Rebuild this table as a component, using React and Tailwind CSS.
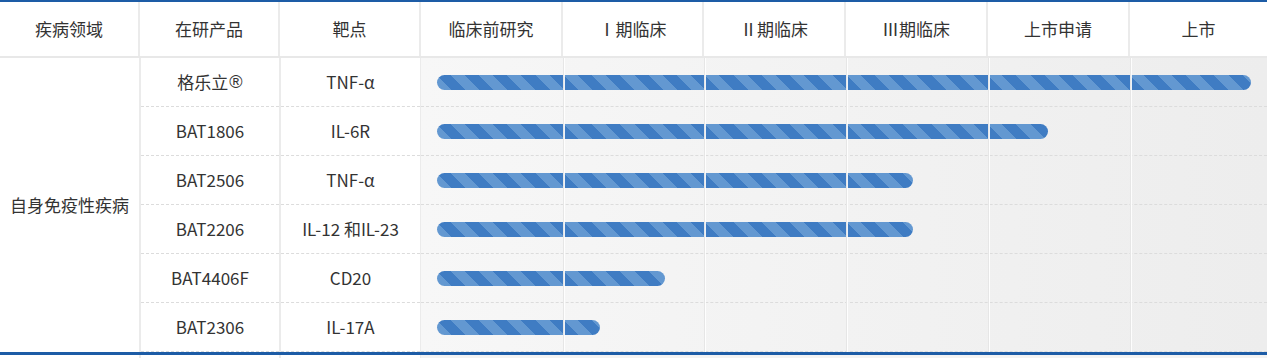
import React from "react";

const heads = ["疾病领域", "在研产品", "靶点", "临床前研究", "Ⅰ期临床", "Ⅱ期临床", "Ⅲ期临床", "上市申请", "上市"];

const rows = [
  { name: "格乐立", reg: true, target: "TNF-α", bar: "w-[814px]" },
  { name: "BAT1806", target: "IL-6R", bar: "w-[611px]" },
  { name: "BAT2506", target: "TNF-α", bar: "w-[476px]" },
  { name: "BAT2206", target: "IL-12 和IL-23", bar: "w-[476px]" },
  { name: "BAT4406F", target: "CD20", bar: "w-[228px]" },
  { name: "BAT2306", target: "IL-17A", bar: "w-[163px]" },
];

const cols = "grid-cols-[140px_140px_141px_142px_141px_142px_142px_142px_1fr]";

export default function App() {
  return (
    <div className="w-[1267px] h-[358px] overflow-hidden bg-white font-['Noto_Sans_CJK_SC','Noto_Sans',sans-serif] text-[17px] text-[#333]">
      <div className="border-t-[2px] border-[#1d5ca6]">
        <div className={`grid ${cols} h-[56px] border-b-2 border-[#e8e8e8]`}>
          {heads.map((h, i) => (
            <div
              key={i}
              className={`flex items-center justify-center ${i < 8 ? "border-r-2 border-[#ebebeb]" : ""}`}
            >
              {h}
            </div>
          ))}
        </div>
      </div>

      <div className="flex border-b-[3px] border-[#1d5ca6]">
        <div className="w-[141px] shrink-0 flex items-center justify-center border-r-2 border-[#ebebeb]">
          自身免疫性疾病
        </div>
        <div className="w-[140px] shrink-0 flex flex-col border-r-2 border-[#ebebeb]">
          {rows.map((r, i) => (
            <div key={i} className="h-[49px] flex items-center justify-center border-b border-dashed border-[#dcdcdc]">
              {r.name}
              {r.reg && <span className="font-['Liberation_Sans',sans-serif] text-[18px] ml-[1px]">®</span>}
            </div>
          ))}
        </div>
        <div className="w-[140px] shrink-0 flex flex-col border-r border-[#ebebeb]">
          {rows.map((r, i) => (
            <div key={i} className="h-[49px] flex items-center justify-center border-b border-dashed border-[#dcdcdc]">
              {r.target}
            </div>
          ))}
        </div>
        <div className="relative flex-1 flex flex-col bg-gradient-to-r from-[#f7f7f7] to-[#ededed]">
          {rows.map((r, i) => (
            <div key={i} className="h-[49px] flex items-center pl-[16px] border-b border-dashed border-[#dcdcdc]">
              <div
                className={`${r.bar} h-[15px] rounded-full bg-[repeating-linear-gradient(45deg,#6398d1_0px,#6398d1_10px,#3f7cc3_10px,#3f7cc3_20px)]`}
              />
            </div>
          ))}
          <div className="absolute inset-0 grid grid-cols-[142px_141px_142px_142px_142px_1fr] pointer-events-none">
            {[0, 1, 2, 3, 4, 5].map((c) => (
              <div key={c} className={c === 0 ? "" : "border-l border-[#e6e6e6]"}>
                <div className={c === 0 ? "" : "h-full w-px bg-white/90"} />
              </div>
            ))}
          </div>
        </div>
      </div>
      <div className="flex h-[10px]">
        <div className="w-[141px] border-r-2 border-[#ebebeb]" />
        <div className="w-[140px] border-r-2 border-[#ebebeb]" />
        <div className="w-[140px] border-r border-[#ebebeb]" />
        <div className="flex-1 bg-[#f3f3f3]" />
      </div>
    </div>
  );
}
